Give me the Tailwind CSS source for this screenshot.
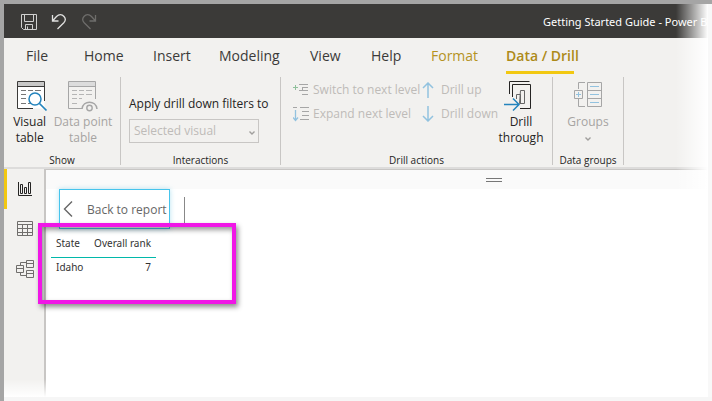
<!DOCTYPE html>
<html lang="en">
<head>
<meta charset="utf-8">
<meta name="viewport" content="width=device-width, initial-scale=1">
<title>Getting Started Guide - Power BI Desktop</title>
<script src="https://cdn.jsdelivr.net/npm/@tailwindcss/browser@4"></script>
</head>
<body class="relative flex h-screen flex-col overflow-hidden bg-[#f2f1ef] border-t-4 border-l-4 border-[#a5a5a5] font-['Open_Sans','Noto_Sans',sans-serif] text-xs text-[#252423]">

<header class="flex h-[34px] shrink-0 items-center overflow-hidden bg-[#3b3a38] pt-[2px] text-white">
  <div class="flex w-[539px] shrink-0 items-center gap-[14px] pl-[17px]">
    <button type="button" aria-label="Save"><svg class="block size-4" viewBox="0 0 16 16" fill="none" stroke="#d0d0cf"><path d="M.5.5h15v15h-13l-2-2zM3.500.5v7h9v-7M4.500 15.500v-5h7v5M6.500 12.500v3"/></svg></button>
    <button type="button" aria-label="Undo"><svg class="block size-4" viewBox="0 0 16 16" fill="none" stroke="#e1e1e0" stroke-width="1.300"><path d="M1.500 1v6h6M1.500 7l4-4.500C8 0 11 .2 13 2.500c1.800 2.100 1.500 4.500-.2 6.300L6.500 15"/></svg></button>
    <button type="button" aria-label="Redo" disabled><svg class="block size-4" viewBox="0 0 16 16" fill="none" stroke="#6e6d6b" stroke-width="1.300"><path d="M14.500 1v6h-6M14.500 7l-4-4.500C8 0 5 .2 3 2.500 1.200 4.600 1.500 7 3.200 8.800L9.500 15"/></svg></button>
  </div>
  <h1 class="min-w-0 flex-1 overflow-hidden font-['Noto_Sans',sans-serif] text-[11px] whitespace-nowrap">Getting Started Guide - Power BI Desktop</h1>
</header>

<nav class="grid h-[39px] shrink-0 grid-cols-[58px_69px_66px_91px_61px_60px_75px_68px] pl-[22px] text-sm leading-9 whitespace-nowrap text-[#3b3a39]">
  <a href="#file">File</a>
  <a href="#home">Home</a>
  <a href="#insert">Insert</a>
  <a href="#modeling">Modeling</a>
  <a href="#view">View</a>
  <a href="#help">Help</a>
  <a href="#format" class="text-[#b5931f]">Format</a>
  <a href="#drill" aria-current="page" class="h-9 border-b-3 border-[#f2c811] font-semibold text-[#ad8a18]">Data / Drill</a>
</nav>

<section aria-label="Data / Drill" class="flex h-[90px] shrink-0 leading-4 whitespace-nowrap">
  <div class="flex h-[88px] w-[117px] shrink-0 flex-col border-r border-[#c8c6c4]">
    <div class="flex flex-1 justify-center gap-[6px] pt-1">
      <button type="button" class="flex flex-col items-center">
        <svg class="ml-1 h-8 w-8 shrink-0" viewBox="0 0 32 32" fill="none"><path d="M1.500 1.500h27v26h-27z" fill="#fff"/><path d="M1 1h28v4H1z" fill="#c8c8c8"/><path d="M17 27.500H1.500v-27h27V20M1.500 5.500h27" stroke="#3b3a39"/><path d="M5 9.500h5m2 0h5m2 0h6M5 13.500h5M5 17.500h5M5 22.500h5m2 0h4" stroke="#777"/><circle cx="19" cy="18" r="6" fill="#fff" stroke="#2484bd" stroke-width="1.500"/><path d="m23.500 22.500 7 7" stroke="#2484bd" stroke-width="1.700"/></svg>
        <span class="mt-[1px]">Visual<br>table</span>
      </button>
      <button type="button" disabled class="flex flex-col items-center text-[#a6a4a2]">
        <svg class="h-8 w-8 shrink-0" viewBox="0 0 32 32" fill="none"><path d="M1 1h27v4H1z" fill="#dcdcdc"/><path d="M15 27.500H1.500v-27h27V18M1.500 5.500h27" stroke="#a6a6a6"/><path d="M5 9.500h5m2 0h5m2 0h6M5 13.500h5m2 0h5m2 0h6M5 17.500h5m2 0h3M5 22.500h5" stroke="#b5b5b5"/><path d="M15 28c1-9 14-9 15 0" stroke="#a6a6a6" stroke-width="1.500"/><circle cx="22.500" cy="27" r="2.700" stroke="#a6a6a6" stroke-width="1.400"/></svg>
        <span class="mt-[1px]">Data point<br>table</span>
      </button>
    </div>
    <h2 class="text-center text-[10px] leading-[10px]">Show</h2>
  </div>

  <div class="flex h-[88px] w-40 shrink-0 flex-col border-r border-[#c8c6c4]">
    <div class="flex flex-1 flex-col gap-[7px] px-2 pt-[19px]">
      <label for="filters">Apply drill down filters to</label>
      <div class="relative w-[130px]">
        <select id="filters" disabled class="block h-6 w-full appearance-none border border-[#c8c6c4] bg-transparent pl-1 text-[#bebbb8] opacity-100"><option>Selected visual</option></select>
        <svg class="pointer-events-none absolute top-3 right-1 h-1 w-[6px]" viewBox="0 0 6 4" fill="none" stroke="#a19f9d" stroke-width="1.400"><path d="m.5.500 2.500 2.500L5.500.500"/></svg>
      </div>
    </div>
    <h2 class="text-center text-[10px] leading-[10px]">Interactions</h2>
  </div>

  <div class="flex h-[88px] w-[272px] shrink-0 flex-col border-r border-[#c8c6c4]">
    <div class="flex flex-1">
      <div class="grid auto-rows-[24px] grid-cols-[129px_74px] content-start pt-[1px] pl-3 text-[#bebbb8]">
        <button type="button" disabled class="flex items-center gap-1"><svg class="h-4 w-4 shrink-0" viewBox="0 0 16 16" fill="none"><path d="M0 5.500h5M2.500 3v5" stroke="#8fc09b"/><path d="M6 2.500h9M9 5.500h6M6 8.500h9M9 12.500h6M9.500 5v4" stroke="#a6a6a6"/></svg>Switch to next level</button>
        <button type="button" disabled class="flex items-center gap-[7px]"><svg class="h-4 w-3 shrink-0" viewBox="0 0 12 16" fill="none" stroke="#92c2df" stroke-width="1.500"><path d="M6 16V1M1 6l5-5 5 5"/></svg>Drill up</button>
        <button type="button" disabled class="flex items-center gap-1"><svg class="h-4 w-4 shrink-0" viewBox="0 0 16 16" fill="none"><path d="M0 1.500h4M7 1.500h9M9 5.500h7M9 9.500h7M7 13.500h9" stroke="#a6a6a6"/><path d="M2.500 4v10M0 11.500l2.500 3 2.500-3" stroke="#92c2df" stroke-width="1.300"/></svg>Expand next level</button>
        <button type="button" disabled class="flex items-center gap-[7px]"><svg class="h-4 w-3 shrink-0" viewBox="0 0 12 16" fill="none" stroke="#92c2df" stroke-width="1.500"><path d="M6 0v15M1 10l5 5 5-5"/></svg>Drill down</button>
      </div>
      <button type="button" class="flex w-[50px] flex-col items-center pt-1">
        <svg class="mr-1 h-8 w-8 shrink-0" viewBox="0 0 32 32" fill="none"><path d="M9.500 16V3.500h18v24H17" stroke="#252423"/><path d="M6.500 13V.5h20" stroke="#252423"/><path d="M13.500 18v-4.500h4v9M17.500 9.500h4v13h-5z" stroke="#666"/><path d="M1 23.500h15M10 17.500l6 6-6 6" stroke="#2484bd" stroke-width="1.500"/></svg>
        <span class="mt-[1px]">Drill<br>through</span>
      </button>
    </div>
    <h2 class="text-center text-[10px] leading-[10px]">Drill actions</h2>
  </div>

  <div class="flex h-[88px] w-[71px] shrink-0 flex-col border-r border-[#c8c6c4]">
    <button type="button" disabled class="flex flex-1 flex-col items-center pt-1 text-[#a6a4a2]">
      <svg class="h-8 w-8 shrink-0" viewBox="0 0 32 32" fill="none"><path d="M15.500 1.500h14v24h-14zM15.500 9.500h14M15.500 17.500h14M13 1.500H6.500V8M6.500 18v7.500H13" stroke="#a6a6a6"/><path d="M2.500 9.500h8v8h-8z" stroke="#a6a6a6"/><path d="M4 13.500h5M6.500 11v5M18 5.500h9M18 13.500h9M18 21.500h9" stroke="#92c2df"/></svg>
      <span class="mt-[1px]">Groups</span>
      <svg class="mt-[7px] h-1 w-[6px]" viewBox="0 0 6 4" fill="none" stroke="#a19f9d" stroke-width="1.400"><path d="m.5.500 2.500 2.500L5.500.500"/></svg>
    </button>
    <h2 class="text-center text-[10px] leading-[10px]">Data groups</h2>
  </div>
</section>

<div class="flex min-h-0 flex-1 border-t-2 border-[#dddcdb]">
  <nav aria-label="Views" class="flex w-10 shrink-0 flex-col">
    <a href="#report" aria-label="Report view" aria-current="page" class="flex h-10 items-center justify-center border-l-3 border-[#f2c811] pr-[2px]"><svg class="h-4 w-4" viewBox="0 0 16 16" fill="none" stroke="#252423"><path d="M1.500 1v13.500H15M3.500 12.500v-9h2v9zM7.500 12.500v-6h2v6zM11.500 12.500v-11h2v11z"/></svg></a>
    <a href="#data" aria-label="Data view" class="flex h-10 items-center justify-center pl-[2px]"><svg class="h-4 w-4" viewBox="0 0 16 16" fill="none" stroke="#706e6c"><path d="M.5.5h15v14H.5zM.5 3.500h15M.5 7.500h15M.5 11.500h15M5.500 4v10.500M10.500 4v10.500"/></svg></a>
    <a href="#model" aria-label="Model view" class="flex h-10 items-center justify-center pl-[2px]"><svg class="h-[18px] w-[18px]" viewBox="0 0 18 18" fill="none" stroke="#706e6c"><path d="M.5 5.500h7v7h-7zM.5 8.500h7M10.500.5h7v7h-7zM10.500 3.500h7M10.500 10.500h7v7h-7zM10.500 13.500h7M4.500 5.500v-3h6M4.500 12.500v3h6"/></svg></a>
  </nav>
  <main class="min-w-0 flex-1 border-t border-l-2 border-[#c8c6c4] bg-white">
    <div class="flex h-[19px] items-center justify-center bg-[#fafafa] pl-[230px]"><div class="h-1 w-4 border-y border-[#777]"></div></div>
    <div class="flex gap-[14px] pl-[13px]">
      <button type="button" class="flex h-10 w-[111px] items-center gap-[14px] border border-[#46c4ec] pl-[3px] text-[#666] shadow-[0_0_5px_rgba(70,185,220,0.4)]"><svg class="h-4 w-[10px] shrink-0" viewBox="0 0 10 16" fill="none" stroke="#666" stroke-width="1.400"><path d="M9 .5 1.500 8 9 15.500"/></svg><span class="pt-[2px] whitespace-nowrap">Back to report</span></button>
      <div class="mt-2 h-7 w-px bg-[#888]"></div>
    </div>
    <table class="mt-[5px] ml-[5px] w-[105px] table-fixed font-['Noto_Sans',sans-serif] text-[10px] leading-[18px] whitespace-nowrap text-[#333]">
      <thead><tr class="h-[23px] border-b border-[#01b8aa] align-top"><th class="w-[38px] pl-[5px] text-left font-normal">State</th><th class="pr-[5px] text-right font-normal">Overall rank</th></tr></thead>
      <tbody><tr class="h-5"><td class="pl-[5px]">Idaho</td><td class="pr-[5px] text-right">7</td></tr></tbody>
    </table>
  </main>
</div>

<div class="pointer-events-none absolute top-[219px] left-[34px] h-[81px] w-[198px] border-4 border-[#f016e6] shadow-[2px_3px_5px_rgba(0,0,0,0.45),inset_2px_3px_5px_rgba(0,0,0,0.4)]"></div>
<div class="pointer-events-none absolute -top-1 right-1 bottom-1 w-8 bg-linear-to-r from-white/0 to-white"></div>
<div class="pointer-events-none absolute right-0 bottom-1 -left-1 h-[18px] bg-linear-to-b from-white/0 to-white"></div>
<div class="pointer-events-none absolute -top-1 right-0 bottom-0 w-1 bg-[#f8f8f8]"></div>
<div class="pointer-events-none absolute right-0 bottom-0 -left-1 h-1 bg-[#f6f6f6]"></div>
</body>
</html>
